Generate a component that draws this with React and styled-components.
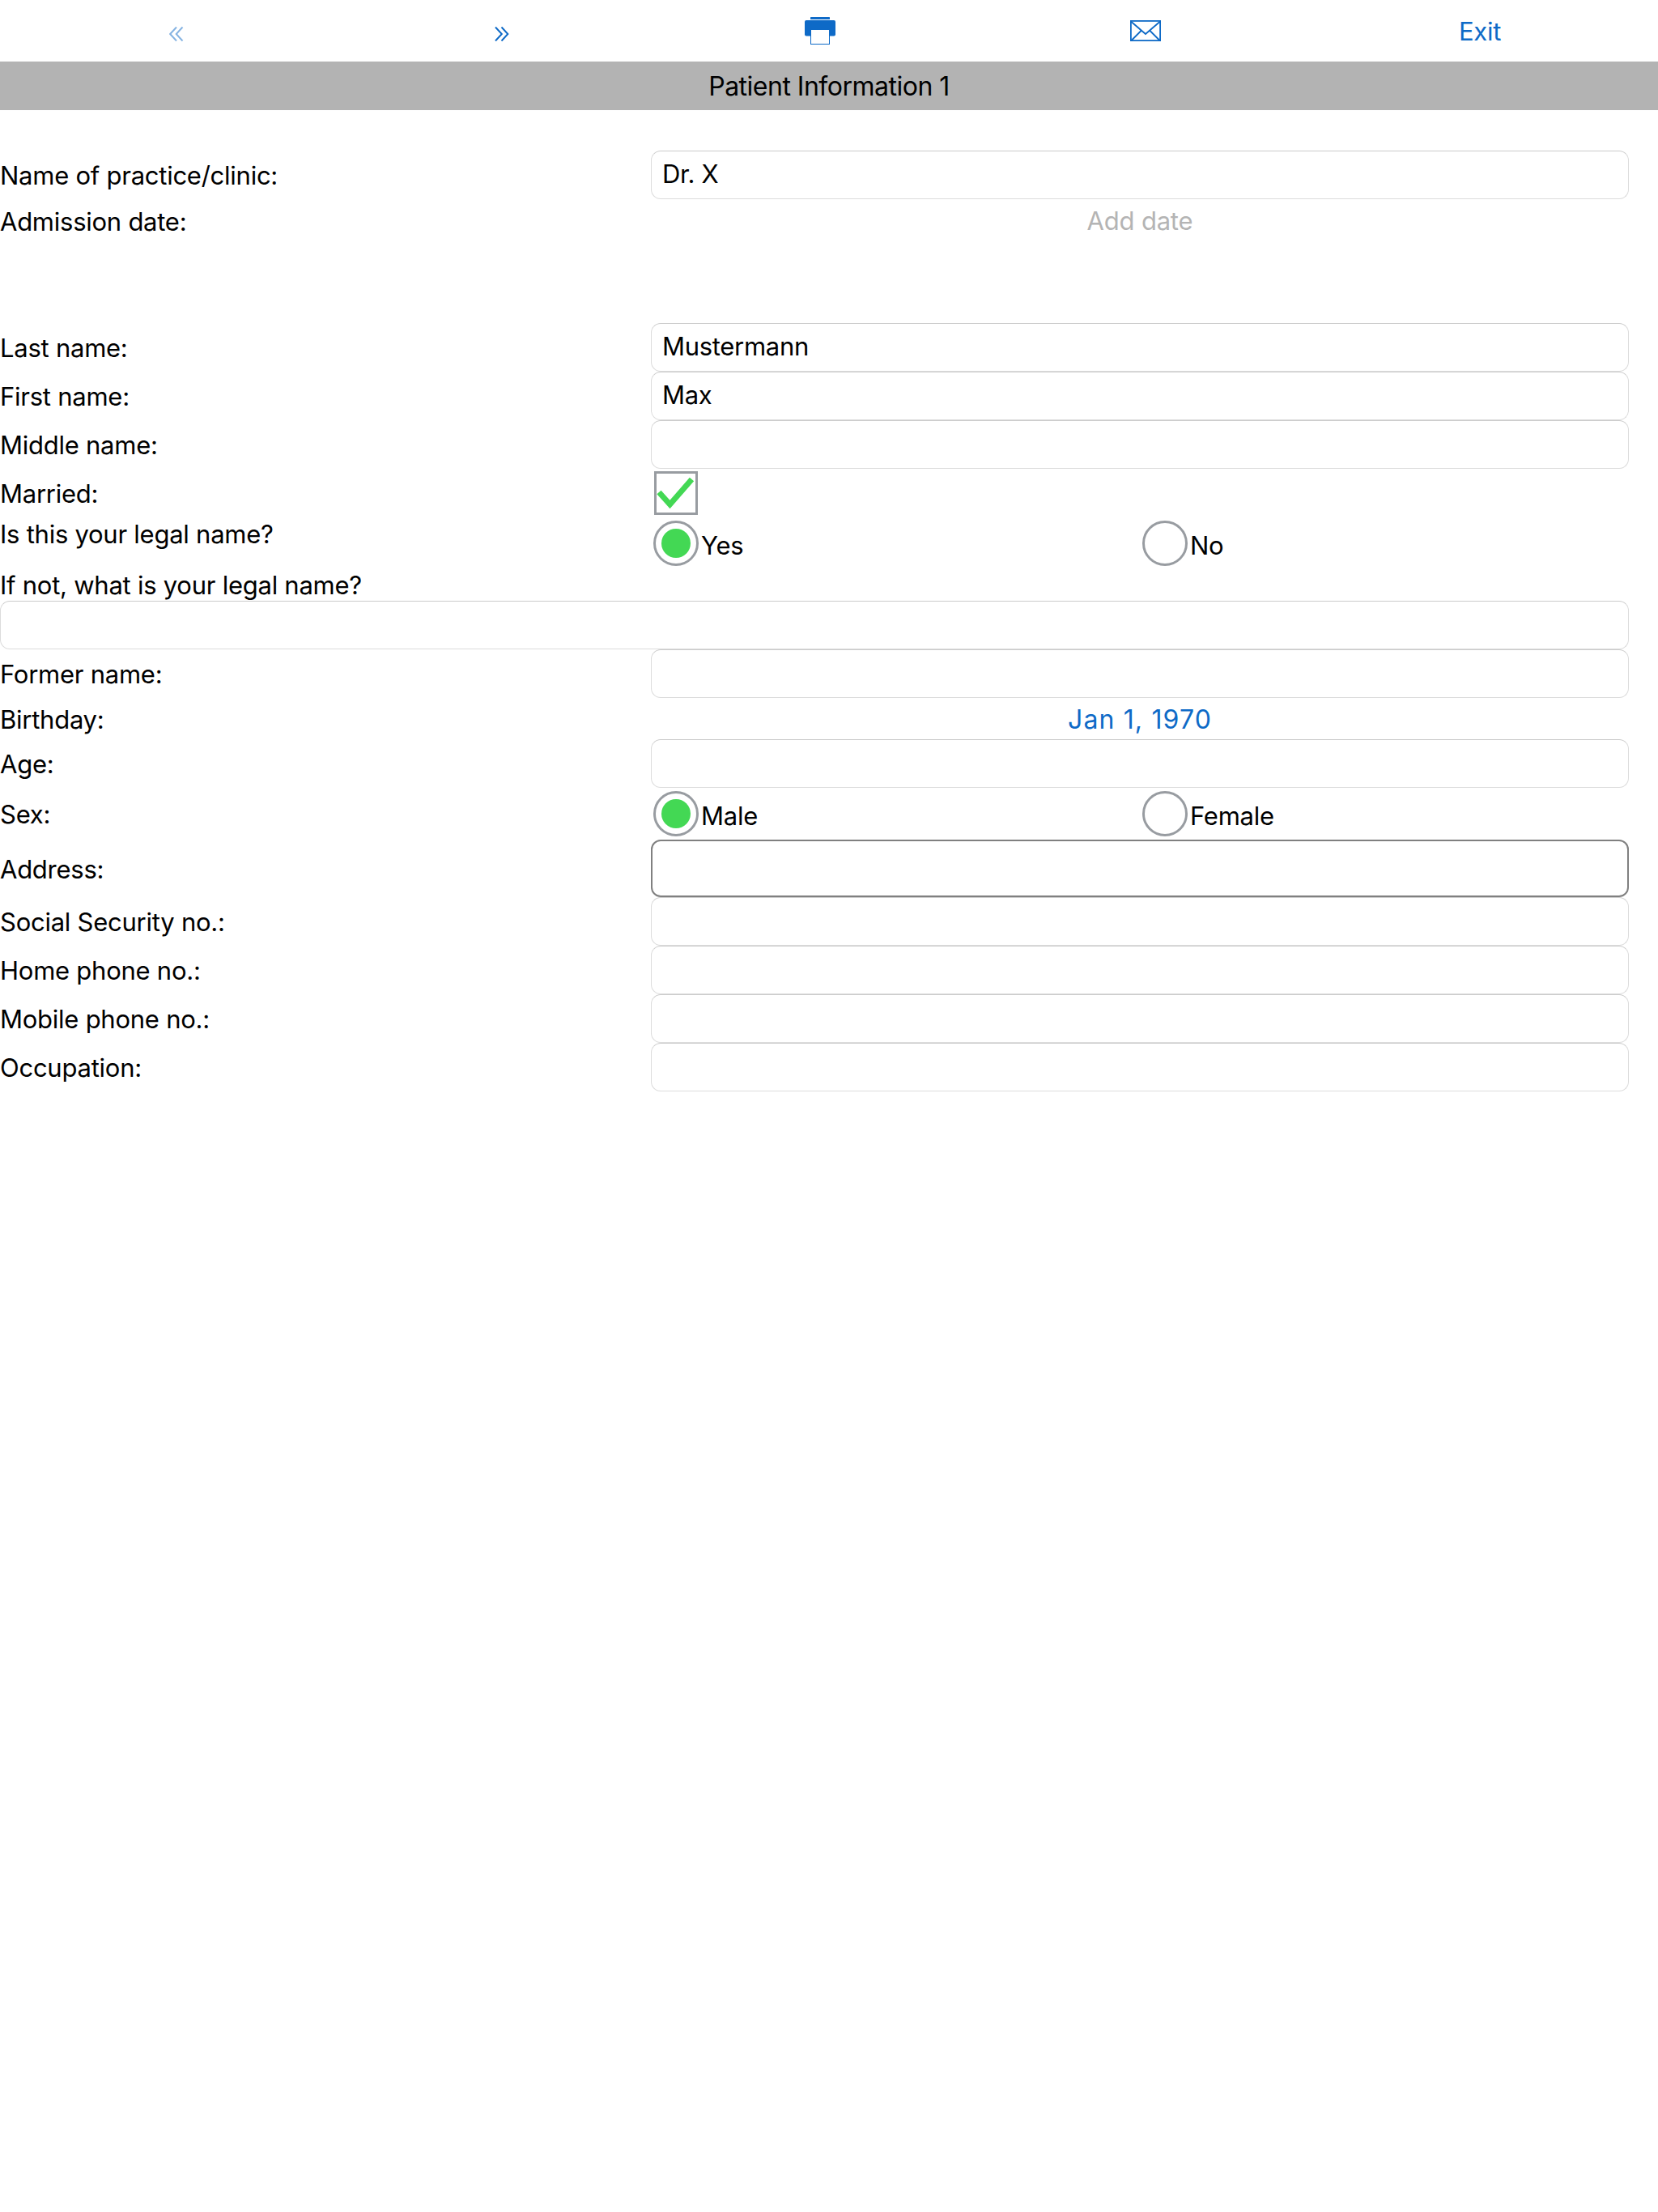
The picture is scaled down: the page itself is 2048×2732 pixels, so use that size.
import React from 'react';
import styled, { createGlobalStyle } from 'styled-components';

const GlobalStyle = createGlobalStyle`
  html, body {
    margin: 0;
    padding: 0;
    background: #fff;
  }
  body {
    font-family: Inter, "Noto Sans", "Liberation Sans", sans-serif;
    font-size: 31px;
    letter-spacing: -0.25px;
    color: #000;
  }
`;

const BLUE = '#0e6ac7';
const GREEN = '#43d854';

const Page = styled.main`
  width: 2048px;
  min-height: 2732px;
  background: #fff;
`;

const Toolbar = styled.nav`
  display: grid;
  grid-template-columns: 436px 368px 418px 386px 440px;
  height: 76px;
  align-items: center;
  justify-items: center;
`;

const ToolButton = styled.button`
  display: flex;
  align-items: center;
  justify-content: center;
  padding: 0;
  margin-top: ${(p) => p.$mt || 0}px;
  border: 0;
  background: none;
  font: inherit;
  letter-spacing: inherit;
  color: ${BLUE};
  opacity: ${(p) => (p.$dim ? 0.5 : 1)};
`;

const TitleBar = styled.h1`
  display: flex;
  align-items: center;
  justify-content: center;
  height: 60px;
  margin: 0 0 50px;
  background: #b3b3b3;
  font-size: 32px;
  font-weight: 400;
  letter-spacing: -0.5px;
`;

const Row = styled.div`
  display: grid;
  grid-template-columns: 804px 1208px;
  height: ${(p) => p.$h || 60}px;
  margin-bottom: ${(p) => p.$mb || 0}px;
  align-items: center;
`;

const Label = styled.label`
  display: block;
  align-self: ${(p) => (p.$top ? 'start' : 'center')};
  padding-top: ${(p) => (p.$top ? 2 : 1)}px;
  white-space: nowrap;
`;

const Field = styled.div`
  box-sizing: border-box;
  display: flex;
  align-items: center;
  width: ${(p) => (p.$wide ? '2012px' : '1208px')};
  height: ${(p) => p.$h || 60}px;
  padding: 0 13px 3px;
  background: #fff;
  border: ${(p) => (p.$active ? '2px solid #808080' : '1px solid #dcdcdc')};
  border-top-color: ${(p) => (p.$active ? '#808080' : '#cbcbcb')};
  border-radius: 12px;
  font-size: 31px;
  letter-spacing: -0.3px;
`;

const DateValue = styled.div`
  text-align: center;
  padding-top: ${(p) => (p.$empty ? 0 : 2)}px;
  font-size: ${(p) => (p.$empty ? 31 : 32)}px;
  letter-spacing: ${(p) => (p.$empty ? -0.2 : 1.15)}px;
  color: ${(p) => (p.$empty ? '#b4b4b4' : BLUE)};
`;

const CheckBox = styled.div`
  box-sizing: border-box;
  width: 54px;
  height: 54px;
  margin-left: 4px;
  border: 3px solid #989ca1;
  svg {
    display: block;
  }
`;

const RadioGroup = styled.div`
  display: grid;
  grid-template-columns: 604px 604px;
  align-items: center;
`;

const RadioOption = styled.div`
  display: flex;
  align-items: center;
  gap: 3px;
  padding-left: 3px;
`;

const RadioCircle = styled.span`
  box-sizing: border-box;
  flex: none;
  display: flex;
  align-items: center;
  justify-content: center;
  width: 56px;
  height: 56px;
  border: 3px solid #989ca1;
  border-radius: 50%;
  &::after {
    content: '';
    display: ${(p) => (p.$on ? 'block' : 'none')};
    width: 36px;
    height: 36px;
    border-radius: 50%;
    background: ${GREEN};
  }
`;

const RadioText = styled.span`
  position: relative;
  top: 2px;
`;

const LegalLabel = styled.div`
  display: flex;
  align-items: center;
  height: 39px;
`;

const ChevronsLeft = () => (
  <svg width="18" height="18" viewBox="0 0 18 18" fill="none" stroke={BLUE} strokeWidth="2">
    <path d="M9 0.5 L1.2 9 L9 17.5" />
    <path d="M16.5 0.5 L8.7 9 L16.5 17.5" />
  </svg>
);

const ChevronsRight = () => (
  <svg width="18" height="18" viewBox="0 0 18 18" fill="none" stroke={BLUE} strokeWidth="2">
    <path d="M1 0.5 L8.8 9 L1 17.5" />
    <path d="M8.5 0.5 L16.3 9 L8.5 17.5" />
  </svg>
);

const PrinterIcon = () => (
  <svg width="38" height="34" viewBox="0 0 38 34">
    <rect x="7" y="0" width="24" height="3" rx="0.5" fill={BLUE} />
    <rect x="0" y="4" width="38" height="19.5" rx="2" fill={BLUE} />
    <rect x="7.5" y="15.5" width="23" height="18" fill="#fff" stroke={BLUE} />
  </svg>
);

const MailIcon = () => (
  <svg width="38" height="26" viewBox="0 0 38 26" fill="none" stroke={BLUE} strokeWidth="1.8">
    <rect x="0.9" y="0.9" width="36.2" height="24.2" />
    <path d="M1 1.5 L19 17 L37 1.5" />
    <path d="M1.5 25 L14 12.5 M36.5 25 L24 12.5" />
  </svg>
);

const CheckMark = () => (
  <svg width="48" height="48" viewBox="0 0 48 48" fill="none" stroke={GREEN} strokeWidth="7">
    <path d="M3 23 L16.5 38 L43.5 7" />
  </svg>
);

const Radio = ({ on, children }) => (
  <RadioOption>
    <RadioCircle $on={on} />
    <RadioText>{children}</RadioText>
  </RadioOption>
);

const App = () => {
  return (
    <Page>
      <GlobalStyle />
      <Toolbar>
        <ToolButton $dim $mt={7}><ChevronsLeft /></ToolButton>
        <ToolButton $mt={7}><ChevronsRight /></ToolButton>
        <ToolButton><PrinterIcon /></ToolButton>
        <ToolButton><MailIcon /></ToolButton>
        <ToolButton>Exit</ToolButton>
      </Toolbar>
      <TitleBar>Patient Information 1</TitleBar>

      <Row>
        <Label>Name of practice/clinic:</Label>
        <Field>Dr. X</Field>
      </Row>
      <Row $h={53} $mb={100}>
        <Label>Admission date:</Label>
        <DateValue $empty>Add date</DateValue>
      </Row>

      <Row>
        <Label>Last name:</Label>
        <Field>Mustermann</Field>
      </Row>
      <Row>
        <Label>First name:</Label>
        <Field>Max</Field>
      </Row>
      <Row>
        <Label>Middle name:</Label>
        <Field />
      </Row>
      <Row>
        <Label>Married:</Label>
        <CheckBox><CheckMark /></CheckBox>
      </Row>
      <Row $h={64}>
        <Label $top>Is this your legal name?</Label>
        <RadioGroup>
          <Radio on>Yes</Radio>
          <Radio>No</Radio>
        </RadioGroup>
      </Row>
      <LegalLabel>If not, what is your legal name?</LegalLabel>
      <Field $wide />
      <Row>
        <Label>Former name:</Label>
        <Field />
      </Row>
      <Row $h={51}>
        <Label>Birthday:</Label>
        <DateValue>Jan 1, 1970</DateValue>
      </Row>
      <Row>
        <Label>Age:</Label>
        <Field />
      </Row>
      <Row $h={64}>
        <Label>Sex:</Label>
        <RadioGroup>
          <Radio on>Male</Radio>
          <Radio>Female</Radio>
        </RadioGroup>
      </Row>
      <Row $h={71}>
        <Label>Address:</Label>
        <Field $h={71} $active />
      </Row>
      <Row>
        <Label>Social Security no.:</Label>
        <Field />
      </Row>
      <Row>
        <Label>Home phone no.:</Label>
        <Field />
      </Row>
      <Row>
        <Label>Mobile phone no.:</Label>
        <Field />
      </Row>
      <Row>
        <Label>Occupation:</Label>
        <Field />
      </Row>
    </Page>
  );
};

export default App;
